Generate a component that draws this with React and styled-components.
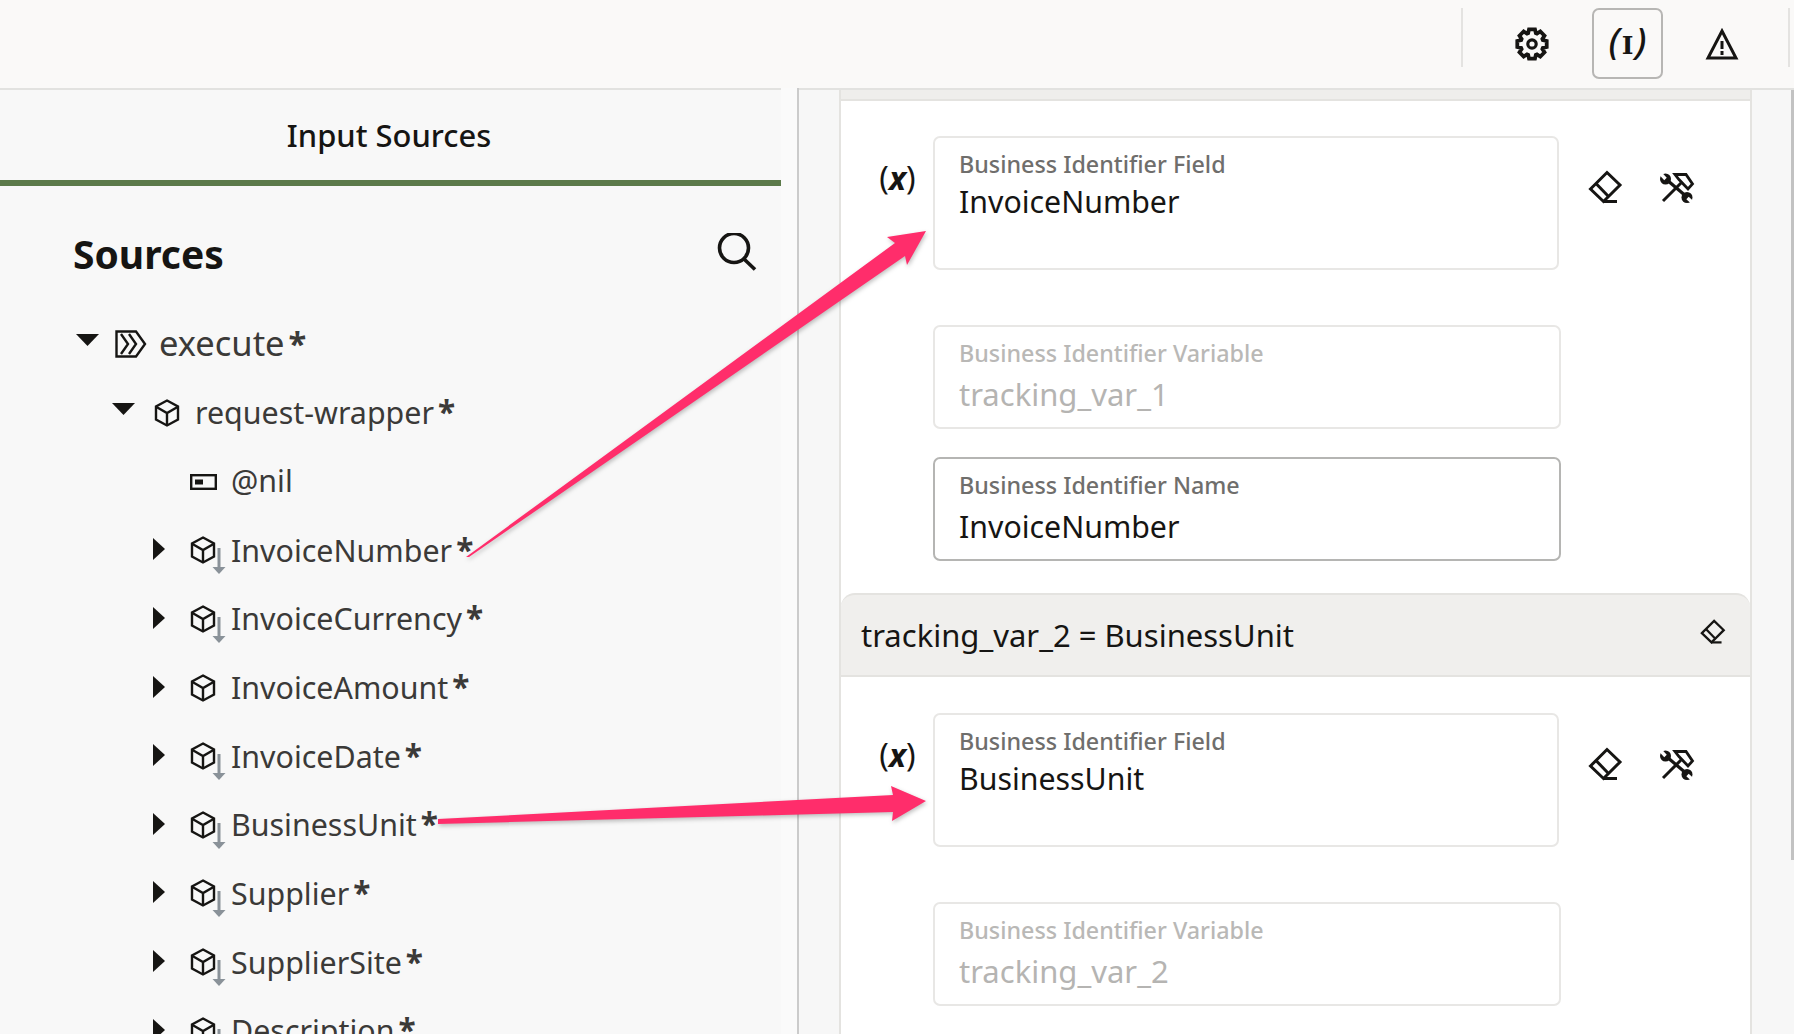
import React from 'react';
import styled, { createGlobalStyle } from 'styled-components';

const GlobalStyle = createGlobalStyle`
  html, body { margin: 0; padding: 0; background: #fafafa; }
  body { font-family: "Noto Sans", "Open Sans", sans-serif; color: #161513; }
  * { box-sizing: border-box; }
`;

const Page = styled.div`
  position: relative;
  width: 100vw;
  height: 100vh;
  overflow: hidden;
  background: #fafafa;
`;

const TopBar = styled.header`
  display: flex;
  align-items: flex-start;
  justify-content: flex-end;
  height: 88px;
  padding: 8px 4px 0 0;
  background: #faf9f8;
`;

const Separator = styled.div`
  width: 2px;
  height: 59px;
  background: #e4e3e1;
`;

const ToolGroup = styled.div`
  display: flex;
  align-items: center;
  width: 325px;
  height: 71px;
`;

const ToolButton = styled.button`
  display: flex;
  align-items: center;
  justify-content: center;
  width: 71px;
  height: 71px;
  padding: 0;
  margin-left: ${(p) => p.$gap}px;
  background: transparent;
  color: #161513;
  border: 2px solid ${(p) => (p.$active ? '#b7b6b4' : 'transparent')};
  border-radius: 7px;
`;

const VarGlyph = styled.span`
  font-family: "Noto Sans", sans-serif;
  font-size: 37px;
  font-style: italic;
  font-weight: 500;
  line-height: 1;
  margin-top: -8px;
  i {
    font-family: "DejaVu Serif", serif;
    font-style: normal;
    font-size: 25px;
    font-weight: 700;
    margin: 0 2px;
  }
`;

const Main = styled.main`
  display: flex;
  height: calc(100vh - 88px);
`;

const LeftPanel = styled.section`
  width: 781px;
  height: 100%;
  overflow: hidden;
  background: #f8f8f8;
  border-top: 2px solid #e2e2e0;
`;

const TabHeader = styled.div`
  display: flex;
  align-items: center;
  justify-content: center;
  height: 96px;
  padding-right: 3px;
  font-size: 30.9px;
  font-weight: 500;
  border-bottom: 6px solid #5c7a4a;
`;

const SourcesHead = styled.div`
  display: flex;
  align-items: center;
  justify-content: space-between;
  height: 124px;
  padding: 10px 24px 0 73px;
`;

const SourcesTitle = styled.h2`
  margin: 0;
  font-size: 39px;
  font-weight: 700;
  line-height: 1;
`;

const TreeRow = styled.div`
  display: flex;
  align-items: center;
  height: 68.65px;
  padding-left: ${(p) => 69 + p.$level * 36}px;
  font-size: ${(p) => (p.$level === 0 ? 34.5 : 30.4)}px;
  color: #3b3a38;
`;

const CaretCell = styled.span`
  display: flex;
  justify-content: center;
  width: 36px;
  flex: none;
  margin-top: ${(p) => (p.$open ? -8 : -2)}px;
`;

const IconCell = styled.span`
  display: flex;
  justify-content: center;
  width: 54px;
  flex: none;
  padding-right: 2px;
`;

const TreeLabel = styled.span`
  margin-top: ${(p) => (p.$root ? -3 : -2)}px;
`;

const Required = styled.span`
  margin-left: 4px;
  font-size: ${(p) => (p.$root ? 0.95 : 1.04)}em;
  font-weight: 700;
  color: #3b3a38;
`;

const Gutter = styled.div`
  width: 18px;
  background: #fafafa;
  border-right: 2px solid #cbcbcb;
`;

const RightPanel = styled.section`
  position: relative;
  flex: 1;
  height: 100%;
  padding-left: 40px;
  overflow: hidden;
  background: #f7f7f7;
  border-top: 2px solid #e2e2e0;
`;

const ScrollThumb = styled.div`
  position: absolute;
  top: 0;
  right: 0;
  width: 3px;
  height: 770px;
  background: #c2c2c2;
`;

const Card = styled.div`
  width: 913px;
  border-left: 2px solid #e4e3e0;
  border-right: 2px solid #e4e3e0;
  background: #fff;
`;

const StubHeader = styled.div`
  height: 11px;
  background: #efeeec;
  border-bottom: 2px solid #e4e3e0;
`;

const GroupBody = styled.div`
  padding: ${(p) => p.$top}px 0 32px;
  background: #fff;
  border-radius: 0 0 14px 14px;
`;

const GroupHeader = styled.div`
  display: flex;
  align-items: center;
  justify-content: space-between;
  height: 84px;
  padding: 0 24px 0 20px;
  font-size: 31px;
  color: #161513;
  background: #f0efed;
  border-top: 2px solid #e4e3e0;
  border-bottom: 2px solid #e4e3e0;
  border-radius: 14px 14px 0 0;
  svg { margin-top: -6px; }
`;

const FieldRow = styled.div`
  display: flex;
  align-items: flex-start;
  margin-top: ${(p) => p.$gap || 0}px;
`;

const BindLabel = styled.div`
  width: 92px;
  padding: 23px 0 0 21px;
  text-align: center;
  font-size: 32px;
  line-height: 1.2;
  b { font-style: italic; font-weight: 700; }
`;

const FieldBox = styled.div`
  width: ${(p) => (p.$tall ? 626 : 628)}px;
  height: ${(p) => (p.$tall ? 134 : 104)}px;
  margin-left: ${(p) => (p.$indent ? 92 : 0)}px;
  padding: 10px 24px 0;
  background: #fff;
  border: 2px solid ${(p) => (p.$focus ? '#b5b5b3' : '#e8e7e5')};
  border-radius: 7px;
`;

const FieldLabel = styled.div`
  font-size: 23.3px;
  font-weight: 500;
  line-height: 32px;
  color: ${(p) => (p.$muted ? '#b9b8b6' : '#6f6e6c')};
`;

const FieldValue = styled.div`
  font-size: ${(p) => (p.$muted ? 31 : 30.3)}px;
  line-height: ${(p) => (p.$tall ? 43 : 51)}px;
  color: ${(p) => (p.$muted ? '#b5b4b2' : '#161513')};
`;

const FieldActions = styled.div`
  display: flex;
  align-items: center;
  gap: 36px;
  padding: 34px 0 0 29px;
`;

const ArrowOverlay = styled.svg`
  position: absolute;
  inset: 0;
  width: 100%;
  height: 100%;
  pointer-events: none;
  filter: drop-shadow(1px 2px 2px rgba(0, 0, 0, 0.25));
`;

const gearPath = () => {
  const cx = 17;
  const cy = 17;
  const pts = [];
  for (let i = 0; i < 8; i++) {
    const a = (i * Math.PI) / 4 - Math.PI / 2;
    const at = (r, off) => [cx + r * Math.cos(a + off), cy + r * Math.sin(a + off)].map((v) => v.toFixed(2)).join(' ');
    pts.push(at(11.5, -0.34), at(15, -0.2), at(15, 0.2), at(11.5, 0.34));
  }
  return `M${pts.join('L')}Z`;
};

const GearIcon = () => (
  <svg width="34" height="34" viewBox="0 0 34 34" fill="none" stroke="currentColor" strokeWidth="3.8" strokeLinejoin="miter">
    <path d={gearPath()} />
    <circle cx="17" cy="17" r="4.2" strokeWidth="3.2" />
  </svg>
);

const WarningIcon = () => (
  <svg width="34" height="34" viewBox="0 0 34 34" fill="none" stroke="currentColor" strokeWidth="3">
    <path d="M17 4 L31 31 H3 Z" />
    <path d="M17 14 V22 M17 24 V28" />
  </svg>
);

const SearchIcon = () => (
  <svg width="40" height="40" viewBox="0 0 40 40" fill="none" stroke="#161513" strokeWidth="3.6">
    <circle cx="17" cy="15" r="14.5" />
    <path d="M27 26 L38 36.5" />
  </svg>
);

const EraserIcon = ({ size = 35 }) => (
  <svg width={size} height={size} viewBox="0 0 35 35" fill="none" stroke="#161513" strokeWidth="3">
    <path d="M2.5 19 L19 2.5 L32 15 L15.5 31.5 Z" />
    <path d="M8 13.5 L21 27" />
    <path d="M15 31.5 H29" />
  </svg>
);

const ToolsIcon = () => (
  <svg width="36" height="32" viewBox="0 0 36 32" fill="none" stroke="#161513" strokeWidth="3">
    <path d="M8 8 L28 25" strokeWidth="3.2" />
    <path d="M4 29 L22 11" />
    <path d="M16 2.5 H27 L33.5 12 L29 17 L20 7.5 Z" fill="#fff" strokeWidth="2.8" />
    <circle cx="6.5" cy="7" r="5.5" fill="#161513" stroke="none" />
    <path d="M6.5 7 L1 1" stroke="#fff" strokeWidth="3.4" />
    <circle cx="28" cy="25.5" r="5.5" fill="#161513" stroke="none" />
    <path d="M28.5 26 L35 32" stroke="#fff" strokeWidth="3.4" />
  </svg>
);

const ExecuteIcon = () => (
  <svg width="32" height="28" viewBox="0 0 32 28" fill="none" stroke="#161513" strokeWidth="2.4">
    <path d="M1.5 1.5 H21 L30 14 L21 26.5 H1.5 Z" />
    <path d="M6 4 L13 14 L6 24" />
    <path d="M14 4 L21 14 L14 24" />
  </svg>
);

const CubeIcon = ({ down }) => (
  <svg width="26" height="28" viewBox="0 0 26 28" fill="none" overflow="visible" stroke="#161513" strokeWidth="2.4">
    <path d="M13 1.5 L24 7.5 V20.5 L13 26.5 L2 20.5 V7.5 Z" />
    <path d="M2.5 8 L13 14 L23.5 8 M13 14 V26" />
    {down && <path d="M29 12 V32" stroke="#8a9299" strokeWidth="3" />}
    {down && <path d="M22.5 31 H35.5 L29 38 Z" fill="#8a9299" stroke="none" />}
  </svg>
);

const AttrIcon = () => (
  <svg width="27" height="16" viewBox="0 0 27 16" fill="none" stroke="#161513" strokeWidth="2.4">
    <rect x="1.2" y="1.2" width="24.6" height="13.6" />
    <rect x="5" y="5.5" width="8" height="5" fill="#161513" stroke="none" />
  </svg>
);

const Caret = ({ open }) =>
  open ? (
    <svg width="23" height="12" viewBox="0 0 23 12"><path d="M0 0 H23 L11.5 12 Z" fill="#161513" /></svg>
  ) : (
    <svg width="12" height="22" viewBox="0 0 12 22"><path d="M0 0 L12 11 L0 22 Z" fill="#161513" /></svg>
  );

const treeItems = [
  { level: 0, name: 'execute', open: true, icon: 'execute' },
  { level: 1, name: 'request-wrapper', open: true, icon: 'cube' },
  { level: 2, name: '@nil', icon: 'attr', leaf: true, plain: true },
  { level: 2, name: 'InvoiceNumber', icon: 'cube', down: true },
  { level: 2, name: 'InvoiceCurrency', icon: 'cube', down: true },
  { level: 2, name: 'InvoiceAmount', icon: 'cube' },
  { level: 2, name: 'InvoiceDate', icon: 'cube', down: true },
  { level: 2, name: 'BusinessUnit', icon: 'cube', down: true },
  { level: 2, name: 'Supplier', icon: 'cube', down: true },
  { level: 2, name: 'SupplierSite', icon: 'cube', down: true },
  { level: 2, name: 'Description', icon: 'cube', down: true },
];

const TreeIcon = ({ item }) => {
  if (item.icon === 'execute') return <ExecuteIcon />;
  if (item.icon === 'attr') return <AttrIcon />;
  return <CubeIcon down={item.down} />;
};

const BindingGroup = ({ field, variable, name, top }) => (
  <GroupBody $top={top}>
    <FieldRow>
      <BindLabel>(<b>x</b>)</BindLabel>
      <FieldBox $tall>
        <FieldLabel>Business Identifier Field</FieldLabel>
        <FieldValue $tall>{field}</FieldValue>
      </FieldBox>
      <FieldActions>
        <EraserIcon />
        <ToolsIcon />
      </FieldActions>
    </FieldRow>
    <FieldRow $gap={55}>
      <FieldBox $indent>
        <FieldLabel $muted>Business Identifier Variable</FieldLabel>
        <FieldValue $muted>{variable}</FieldValue>
      </FieldBox>
    </FieldRow>
    {name && (
      <FieldRow $gap={28}>
        <FieldBox $indent $focus>
          <FieldLabel>Business Identifier Name</FieldLabel>
          <FieldValue>{name}</FieldValue>
        </FieldBox>
      </FieldRow>
    )}
  </GroupBody>
);

export default function App() {
  return (
    <Page>
      <GlobalStyle />
      <TopBar>
        <Separator />
        <ToolGroup>
          <ToolButton $gap={33}><GearIcon /></ToolButton>
          <ToolButton $gap={25} $active><VarGlyph>(<i>I</i>)</VarGlyph></ToolButton>
          <ToolButton $gap={23}><WarningIcon /></ToolButton>
        </ToolGroup>
        <Separator />
      </TopBar>
      <Main>
        <LeftPanel>
          <TabHeader>Input Sources</TabHeader>
          <SourcesHead>
            <SourcesTitle>Sources</SourcesTitle>
            <SearchIcon />
          </SourcesHead>
          {treeItems.map((item) => (
            <TreeRow key={item.name} $level={item.level}>
              <CaretCell $open={item.open}>{!item.leaf && <Caret open={item.open} />}</CaretCell>
              <IconCell><TreeIcon item={item} /></IconCell>
              <TreeLabel $root={item.level === 0}>
                {item.name}
                {!item.plain && <Required $root={item.level === 0}>*</Required>}
              </TreeLabel>
            </TreeRow>
          ))}
        </LeftPanel>
        <Gutter />
        <RightPanel>
          <ScrollThumb />
          <Card>
            <StubHeader />
            <BindingGroup top={35} field="InvoiceNumber" variable="tracking_var_1" name="InvoiceNumber" />
            <GroupHeader>
              tracking_var_2 = BusinessUnit
              <EraserIcon size={26} />
            </GroupHeader>
            <BindingGroup top={36} field="BusinessUnit" variable="tracking_var_2" />
          </Card>
        </RightPanel>
      </Main>
      <ArrowOverlay viewBox="0 0 1794 1034">
        <path d="M466 557 L895 243 L887 237 L926 231 L907 265 L905 256 L469 557 Z" fill="#ff2d6b" />
        <path d="M438 819 L893 795 L891 786 L926 801 L892 821 L893 812 L438 824 Z" fill="#ff2d6b" />
      </ArrowOverlay>
    </Page>
  );
}
